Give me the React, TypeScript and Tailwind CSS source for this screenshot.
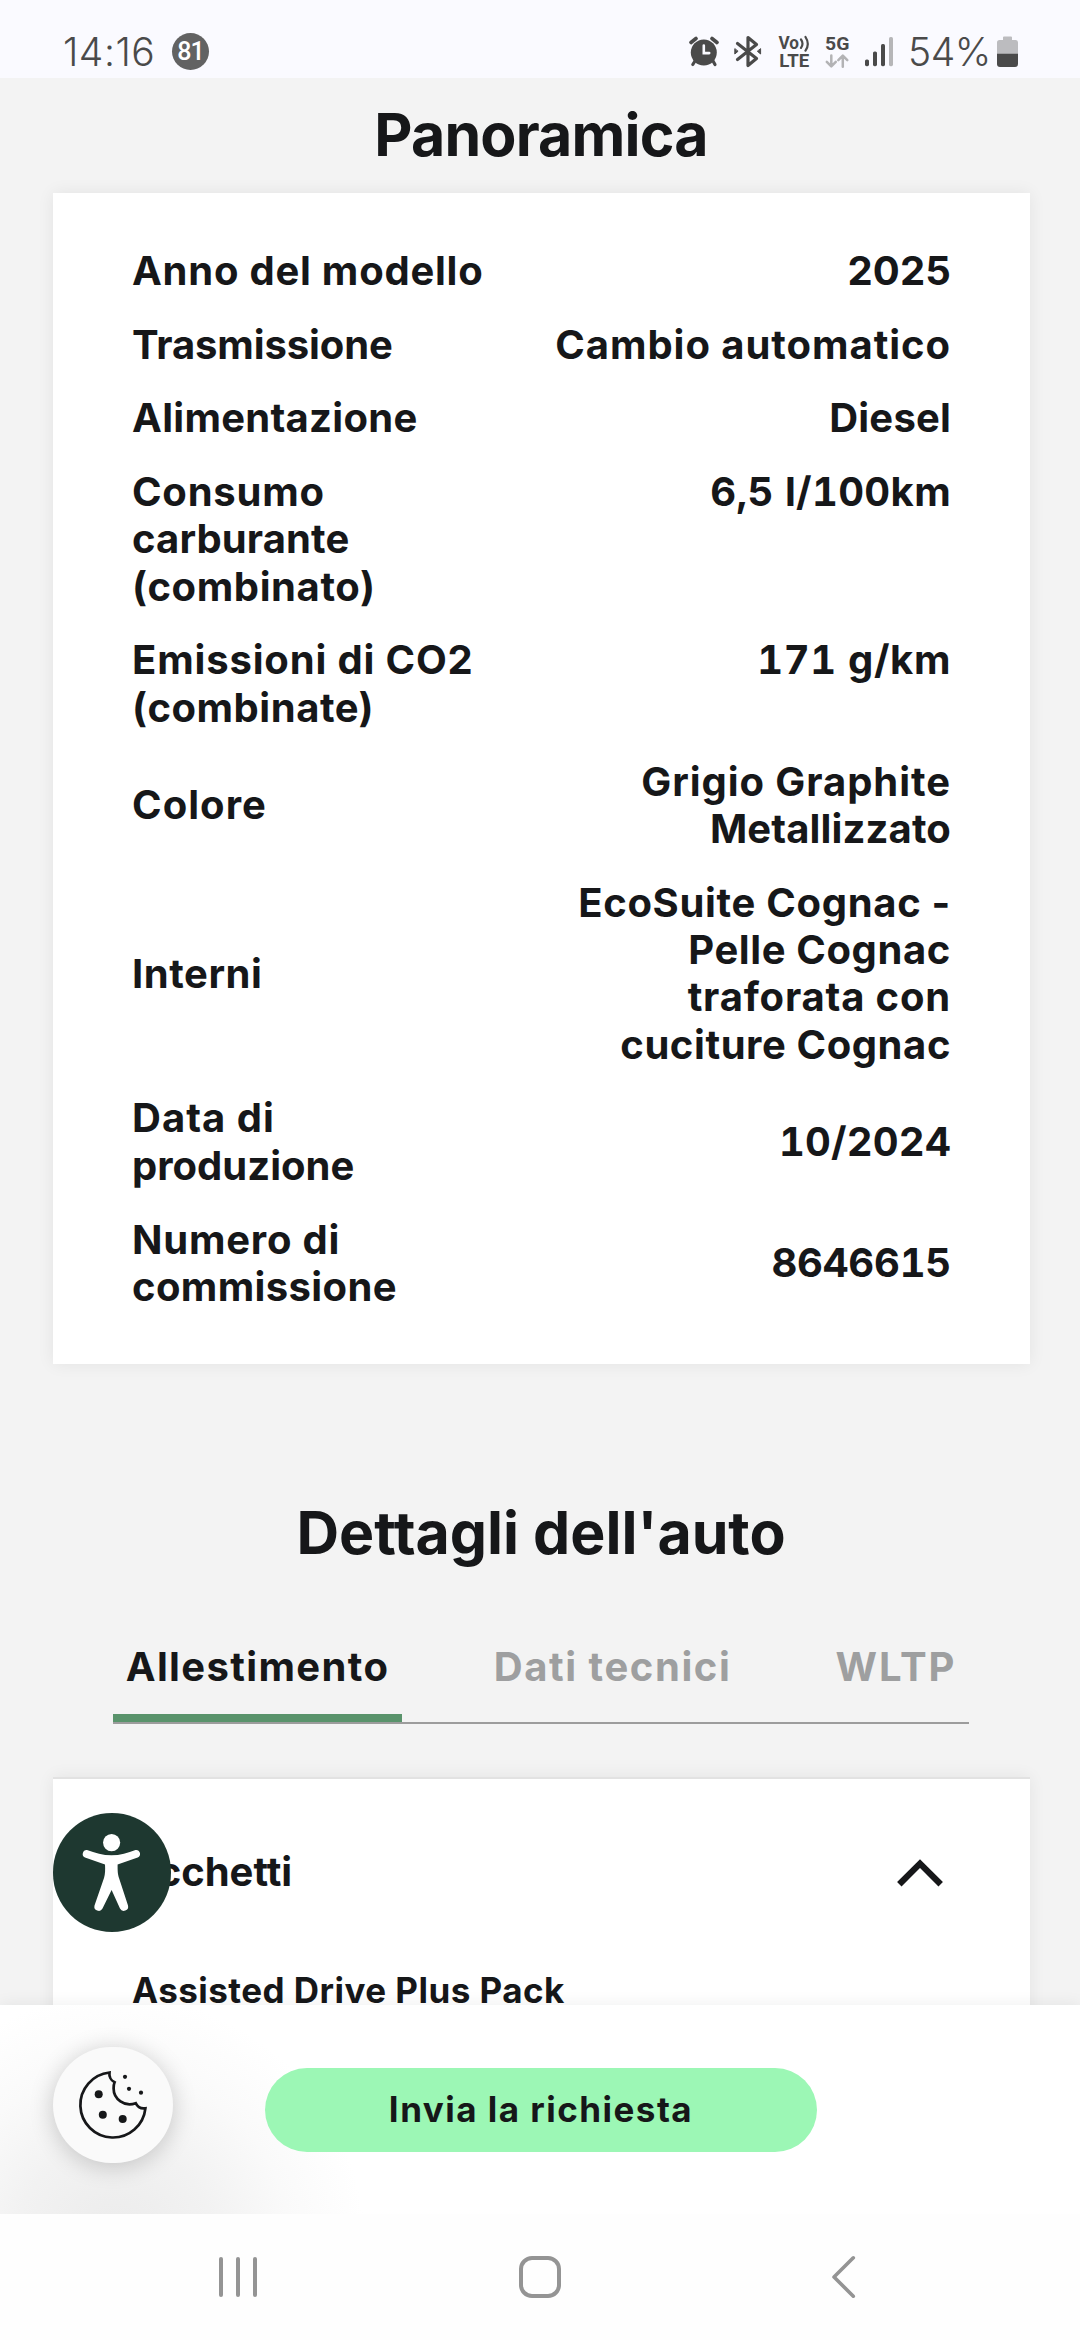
import React from "react";

type Line = [text: string, tracking: string];
type Row = { label: Line[]; value: Line[]; align: string };

const rows: Row[] = [
  { label: [["Anno del modello", "tracking-[0.76px]"]], value: [["2025", "tracking-[0.15px]"]], align: "items-center" },
  { label: [["Trasmissione", "tracking-[-0.11px]"]], value: [["Cambio automatico", "tracking-[0.95px]"]], align: "items-center" },
  { label: [["Alimentazione", "tracking-[0.28px]"]], value: [["Diesel", "tracking-[0.18px]"]], align: "items-center" },
  {
    label: [
      ["Consumo", "tracking-[0.76px]"],
      ["carburante", "tracking-[0.12px]"],
      ["(combinato)", "tracking-[0.6px]"],
    ],
    value: [["6,5 l/100km", "tracking-[0.35px] tabular-nums"]],
    align: "items-start",
  },
  {
    label: [
      ["Emissioni di CO2", "tracking-[0.84px]"],
      ["(combinate)", "tracking-[0.54px]"],
    ],
    value: [["171 g/km", "tracking-[0.6px] tabular-nums"]],
    align: "items-start",
  },
  {
    label: [["Colore", "tracking-[1.04px]"]],
    value: [
      ["Grigio Graphite", "tracking-[0.95px]"],
      ["Metallizzato", "tracking-[0.13px]"],
    ],
    align: "items-center",
  },
  {
    label: [["Interni", "tracking-[0.55px]"]],
    value: [
      ["EcoSuite Cognac -", "tracking-[0.69px]"],
      ["Pelle Cognac", "tracking-[0.61px]"],
      ["traforata con", "tracking-[0.82px]"],
      ["cuciture Cognac", "tracking-[0.58px]"],
    ],
    align: "items-center",
  },
  {
    label: [
      ["Data di", "tracking-[1.02px]"],
      ["produzione", "tracking-[0.02px]"],
    ],
    value: [["10/2024", "tracking-[0.2px] tabular-nums"]],
    align: "items-center",
  },
  {
    label: [
      ["Numero di", "tracking-[0.78px]"],
      ["commissione", "tracking-[0.37px]"],
    ],
    value: [["8646615", "tracking-[-0.2px] tabular-nums"]],
    align: "items-center",
  },
];

function StatusBar() {
  return (
    <header className="flex h-[78px] shrink-0 items-start bg-[#fafaff] pr-[62px] pl-[63px] text-[#4a4a4a]">
      <span className="mt-[28px] w-[92px] text-[39px] leading-[48px] font-[350] tracking-[0.5px] whitespace-nowrap">14:16</span>
      <span className="mt-[33px] ml-[17px] flex h-[37px] w-[37px] items-center justify-center rounded-full bg-[#626262] font-['Roboto',sans-serif] text-[25px] leading-none font-medium tracking-[-1px] text-white">
        81
      </span>
      <div className="ml-auto flex items-start">
        <svg className="mt-[36px]" width="30" height="31" viewBox="0 0 30 31" fill="#4a4a4a">
          <circle cx="14.8" cy="16.5" r="13" />
          <path d="M2 6.5 7 2.5M28 6.5 23 2.5" stroke="#4a4a4a" strokeWidth="3.6" strokeLinecap="round" />
          <path d="M6 25 3.8 28.5M24 25 26 28.5" stroke="#4a4a4a" strokeWidth="3.2" strokeLinecap="round" />
          <path d="M14.8 9.5v7.6h5.4" fill="none" stroke="#fafaff" strokeWidth="2.6" strokeLinecap="round" />
        </svg>
        <svg className="mt-[35px] ml-[14px]" width="29" height="33" viewBox="0 0 29 33" fill="none" stroke="#4a4a4a" strokeWidth="3.2" strokeLinecap="round" strokeLinejoin="round">
          <path d="M4.5 8.5 23.5 23.5 15 30.5V2.5L23.5 9.5 4.5 24.5" />
          <path d="M1.8 14v5l3-2.5zM27.6 14v5l-3-2.5z" strokeWidth="1" fill="#4a4a4a" />
        </svg>
        <svg className="mt-[34px] ml-[16px]" width="33" height="35" viewBox="0 0 33 35" fill="#4a4a4a">
          <text x="0.5" y="15.3" fontFamily="Roboto" fontWeight="700" fontSize="17.5" textLength="20.5" lengthAdjust="spacingAndGlyphs">Vo</text>
          <text x="1.2" y="33" fontFamily="Roboto" fontWeight="700" fontSize="17.5" textLength="30" lengthAdjust="spacingAndGlyphs">LTE</text>
          <path d="M23 5.5q3 4.2 0 8.4M27.5 3q4.6 7 0 13.6" fill="none" stroke="#4a4a4a" strokeWidth="2.2" strokeLinecap="round" />
        </svg>
        <svg className="mt-[34px] ml-[14px]" width="25" height="35" viewBox="0 0 25 35">
          <text x="0" y="16" fill="#4a4a4a" fontFamily="Roboto" fontWeight="700" fontSize="18.5" textLength="24.4" lengthAdjust="spacingAndGlyphs">5G</text>
          <path d="M6.3 21.5V32M1.8 27.8 6.3 32.4 10.8 27.8M17.8 32.8V22M13.3 26.2 17.8 21.6 22.3 26.2" fill="none" stroke="#b3b3b5" strokeWidth="2.5" strokeLinecap="round" strokeLinejoin="round" />
        </svg>
        <svg className="mt-[36px] ml-[15px]" width="29" height="31" viewBox="0 0 29 31" fill="#4a4a4a">
          <rect x="0" y="23.5" width="4" height="6.7" rx="1.6" />
          <rect x="8" y="15.5" width="4" height="14.7" rx="1.6" />
          <rect x="16" y="8" width="4" height="22.2" rx="1.6" />
          <rect x="24" y="1" width="4" height="29.2" rx="1.6" fill="#b6b6b8" />
        </svg>
        <span className="mt-[28px] ml-[14px] w-[83px] text-[39px] leading-[48px] font-[350] tracking-[-0.5px] whitespace-nowrap">54%</span>
        <svg className="mt-[36px] ml-[6px]" width="21" height="31" viewBox="0 0 21 31">
          <path d="M6 4V1.5Q6 0.5 7 0.5H14Q15 0.5 15 1.5V4H18.5Q21 4 21 6.5V18H0V6.5Q0 4 2.5 4Z" fill="#bcbcbf" />
          <path d="M0 17.8H21V28Q21 31 18 31H3Q0 31 0 28Z" fill="#4a4a4a" />
        </svg>
      </div>
    </header>
  );
}

function Overview() {
  return (
    <section className="ml-[53px] flex h-[1171px] w-[977px] flex-col gap-[26.25px] bg-white px-[79px] pt-[54px] text-[40px] leading-[47.4px] shadow-[0_0_16px_rgba(0,0,0,0.07)]">
      {rows.map((row) => (
        <div key={row.label[0][0]} className={`flex justify-between ${row.align}`}>
          <div>
            {row.label.map(([text, tracking]) => (
              <span key={text} className={`block whitespace-nowrap ${tracking}`}>{text}</span>
            ))}
          </div>
          <div className="text-right">
            {row.value.map(([text, tracking]) => (
              <span key={text} className={`block whitespace-nowrap ${tracking}`}>{text}</span>
            ))}
          </div>
        </div>
      ))}
    </section>
  );
}

function Tabs() {
  return (
    <nav className="mt-[75px] ml-[113px] flex w-[856px] justify-between border-b-2 border-[#9c9c9c] text-[40px] leading-[48px] whitespace-nowrap text-[#9e9fa0]">
      <span className="flex h-[79px] w-[289px] justify-center border-b-8 border-[#59936b] tracking-[1.36px] text-[#161719]">Allestimento</span>
      <span className="flex w-[259px] justify-center tracking-[1.57px]">Dati tecnici</span>
      <span className="flex w-[146px] justify-center tracking-[1.94px]">WLTP</span>
    </nav>
  );
}

function AccessibilityButton() {
  return (
    <button className="absolute top-[1813px] left-[53px] h-[119px] w-[118px] rounded-full bg-[#1e3830]" aria-label="Accessibilità">
      <svg width="118" height="119" viewBox="0 0 118 119" fill="white">
        <circle cx="58.6" cy="29.6" r="8.6" />
        <path d="M34 37C42 40 50 42.3 58.5 42.3S75 40 82.5 37A4 4 0 0 1 84.7 44.6L64.6 51.5C64.6 58 64.7 61 66 65L75 92.5A4.3 4.3 0 0 1 67 95.5L58.6 77 49.5 95.5A4.3 4.3 0 0 1 41.5 92.5L51 65C52.2 61 52.3 57 52 51.5L32 44.6A4 4 0 0 1 34 37Z" />
      </svg>
    </button>
  );
}

function CookieButton() {
  return (
    <button className="absolute top-[2047px] left-[53px] h-[116px] w-[120px] rounded-[60px] bg-[#fafafa] shadow-[0_3px_24px_rgba(0,0,0,0.2)]" aria-label="Cookie">
      <svg width="120" height="116" viewBox="0 0 120 116" fill="#161719">
        <path d="M56.5 25.5A32.6 32.6 0 1 0 92.4 61.3C88 62 84.5 59.8 82.7 56.2C71.5 60.5 60.6 52 60.6 41.5C60.6 39 60.8 37 61.6 35.3C58 33.5 55.9 29.5 56.5 25.5Z" fill="none" stroke="#161719" strokeWidth="2.7" />
        <circle cx="45.7" cy="47.3" r="4" />
        <circle cx="49.8" cy="67.7" r="4" />
        <circle cx="69.7" cy="72" r="4" />
        <circle cx="72" cy="29.8" r="2.1" />
        <circle cx="76" cy="41.8" r="2.1" />
        <circle cx="88" cy="45.7" r="2.1" />
      </svg>
    </button>
  );
}

export default function App() {
  return (
    <div className="relative flex h-[2340px] w-[1080px] flex-col overflow-hidden bg-[#f3f3f3] font-['Inter',sans-serif] text-[#161719]">
      <StatusBar />

      <main className="h-[1927px] shrink-0 overflow-hidden pt-[21px] font-bold">
        <h1 className="mb-[23px] pl-[2px] text-center text-[59px] leading-[71px] tracking-[-0.8px]">Panoramica</h1>
        <Overview />
        <h2 className="mt-[133px] pl-[2px] text-center text-[59px] leading-[71px]">Dettagli dell'auto</h2>
        <Tabs />
        <section className="mt-[53px] ml-[53px] h-[300px] w-[977px] border-t-2 border-[#e2e2e2] bg-white pt-[69px] shadow-[0_0_16px_rgba(0,0,0,0.07)]">
          <div className="flex items-start justify-between pr-[87px] pl-[56px]">
            <h3 className="text-[40px] leading-[48px]">Pacchetti</h3>
            <svg className="mt-[11px]" width="46" height="29" viewBox="0 0 46 29" fill="none" stroke="#161719" strokeWidth="6.3">
              <path d="M2.3 25.2 23 4.6 43.7 25.2" />
            </svg>
          </div>
          <p className="mt-[73px] pl-[79px] text-[35px] leading-[42px] tracking-[0.46px]">Assisted Drive Plus Pack</p>
        </section>
      </main>

      <div className="relative flex h-[209px] shrink-0 items-start justify-center bg-white bg-[radial-gradient(circle_250px_at_115px_240px,#ebebeb_0%,#f2f2f2_40%,#fafafa_70%,#ffffff_100%)] pt-[63px] shadow-[0_0_16px_rgba(0,0,0,0.07)]">
        <button className="ml-[2px] flex h-[84px] w-[552px] justify-center rounded-full bg-[#9cf7b5] pt-[20px] text-[35px] leading-[42px] font-bold tracking-[1.47px]">
          Invia la richiesta
        </button>
      </div>

      <footer className="relative flex h-[126px] shrink-0 items-center bg-[#fefefe]">
        <div className="ml-[219px] flex w-[38px] justify-between">
          <span className="h-10 w-1 rounded-full bg-[#949494]" />
          <span className="h-10 w-1 rounded-full bg-[#949494]" />
          <span className="h-10 w-1 rounded-full bg-[#949494]" />
        </div>
        <div className="ml-[262px] h-[42px] w-[42px] rounded-[13px] border-4 border-[#949494]" />
        <svg className="ml-[270px]" width="25" height="44" viewBox="0 0 25 44" fill="none" stroke="#949494" strokeWidth="3.6" strokeLinecap="round" strokeLinejoin="round">
          <path d="M22.3 2.8 3 22 22.3 41.2" />
        </svg>
      </footer>

      <AccessibilityButton />
      <CookieButton />
    </div>
  );
}
